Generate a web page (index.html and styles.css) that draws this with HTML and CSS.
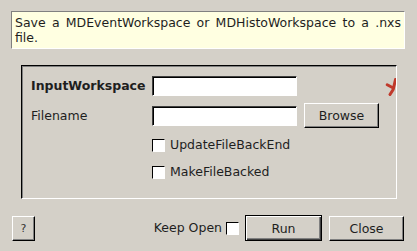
FILE: index.html
```html
<!DOCTYPE html>
<html>
<head>
<meta charset="utf-8">
<link rel="stylesheet" href="styles.css">
</head>
<body>
<div class="dialog">
  <div class="desc">Save a MDEventWorkspace or MDHistoWorkspace to a .nxs file.</div>
  <div class="group">
    <div class="grid">
      <label class="lbl bold">InputWorkspace</label>
      <span class="input"></span>
      <span></span>
      <label class="lbl">Filename</label>
      <span class="input"></span>
      <button class="btn browse">Browse</button>
      <span></span>
      <span class="check-row"><span class="cb"></span>UpdateFileBackEnd</span>
      <span></span>
      <span></span>
      <span class="check-row"><span class="cb"></span>MakeFileBacked</span>
      <span></span>
    </div>
    <svg class="star" width="12" height="18" viewBox="0 0 12 18">
      <path d="M10.5 1.5 L8.2 11.5 L5 16.5" fill="none" stroke="#c0392b" stroke-width="3" stroke-linecap="round" stroke-linejoin="round"/>
      <path d="M2.2 6.8 L7.8 9.8" fill="none" stroke="#c0392b" stroke-width="3" stroke-linecap="round"/>
    </svg>
  </div>
  <div class="footer">
    <button class="btn help">?</button>
    <span class="spacer"></span>
    <span class="keep">Keep Open</span>
    <span class="cb keep-cb"></span>
    <button class="btn run">Run</button>
    <button class="btn close">Close</button>
  </div>
</div>
</body>
</html>
```
FILE: styles.css
```css
html, body {
  margin: 0;
  padding: 0;
}
body {
  width: 417px;
  height: 251px;
  background: #d4d0c8;
  font-family: "DejaVu Sans", sans-serif;
  font-size: 12.5px;
  color: #1e1e1e;
  overflow: hidden;
}
.dialog {
  display: flex;
  flex-direction: column;
  padding-top: 11px;
}
.desc {
  box-sizing: border-box;
  margin-left: 11px;
  width: 394px;
  height: 38px;
  background: #ffffe1;
  border: 1px solid;
  border-color: #808080 #ffffff #ffffff #808080;
  padding: 3px 3px 3px 3px;
  line-height: 15px;
  text-align: justify;
}
.group {
  position: relative;
  box-sizing: border-box;
  margin-top: 16px;
  margin-left: 21px;
  width: 376px;
  height: 134px;
  border: 1px solid;
  border-color: #000 #fff #fff #000;
  box-shadow: inset 1px 1px 0 #808080;
  padding: 10px 0 0 9px;
  overflow: hidden;
}
.grid {
  display: grid;
  grid-template-columns: 121px 145px 82px;
  grid-template-rows: 20px 25px 20px 20px;
  row-gap: 7px;
  align-items: center;
}
.lbl {
  line-height: 14px;
}
.bold {
  font-weight: bold;
}
.input {
  box-sizing: border-box;
  height: 20px;
  background: #fff;
  border: 1px solid;
  border-color: #404040 #ffffff #ffffff #404040;
  box-shadow: inset 1px 1px 0 #000;
}
.btn {
  box-sizing: border-box;
  font-family: "DejaVu Sans", sans-serif;
  font-size: 12.5px;
  color: #1e1e1e;
  background: #d4d0c8;
  border: 1px solid;
  border-color: #ffffff #000000 #000000 #ffffff;
  box-shadow: inset -1px -1px 0 #808080;
  padding: 0;
  margin: 0;
}
.browse {
  margin-left: 7px;
  width: 75px;
  height: 25px;
}
.check-row {
  display: flex;
  align-items: center;
  gap: 5px;
  line-height: 14px;
}
.cb {
  box-sizing: border-box;
  display: inline-block;
  width: 13px;
  height: 13px;
  background: #fff;
  border: 1px solid;
  border-color: #000 #fff #fff #000;
  flex: none;
}
.star {
  position: absolute;
  left: 363px;
  top: 12px;
}
.footer {
  display: flex;
  align-items: center;
  margin-top: 16px;
  padding-left: 12px;
  padding-right: 13px;
  height: 26px;
}
.help {
  width: 23px;
  height: 25px;
  font-size: 11px;
  color: #333;
}
.spacer {
  flex: 1;
}
.keep {
  line-height: 14px;
}
.keep-cb {
  margin-left: 4px;
}
.run {
  margin-left: 6px;
  width: 77px;
  height: 26px;
  border: 1px solid #000;
  box-shadow: inset 1px 1px 0 #ffffff, inset -1px -1px 0 #404040, inset -2px -2px 0 #808080;
}
.close {
  margin-left: 7px;
  width: 75px;
  height: 25px;
}
```
